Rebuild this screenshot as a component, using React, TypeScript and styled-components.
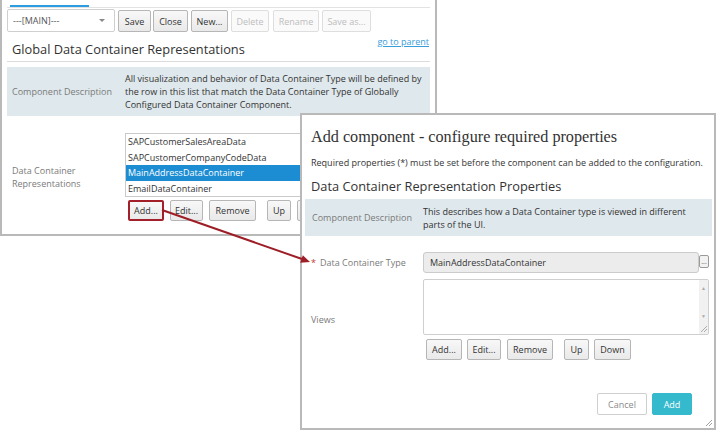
import React from 'react';
import styled, { createGlobalStyle, css } from 'styled-components';

const GlobalStyle = createGlobalStyle`
  html, body { margin: 0; padding: 0; background: #fff; }
  body {
    font-family: 'Open Sans', 'Noto Sans', sans-serif;
    font-size: 9px;
    color: #333;
  }
`;

const Page = styled.div`
  position: relative;
  width: 718px;
  height: 431px;
  overflow: hidden;
  background: #fff;
`;

/* ---------- main window ---------- */

const MainWindow = styled.div`
  width: 437px;
  height: 236px;
  box-sizing: border-box;
  border: 2px solid #b9b9b9;
  border-top: none;
  padding: 0 5px;
`;

const TabStrip = styled.div`
  height: 8px;
  box-sizing: border-box;
  padding: 5px 0 0 3px;
  border-bottom: 1px solid #e2e2e2;
`;

const ActiveTab = styled.div`
  width: 79px;
  height: 2px;
  background: #2d9de0;
`;

const Toolbar = styled.div`
  display: flex;
  align-items: flex-start;
  margin-top: 1px;
`;

const Select = styled.div`
  width: 108px;
  height: 23px;
  box-sizing: border-box;
  border: 1px solid #cfcfcf;
  border-radius: 2px;
  display: flex;
  align-items: center;
  justify-content: space-between;
  padding: 0 9px 0 5px;
  color: #555;
`;

const Caret = styled.span`
  width: 0;
  height: 0;
  border-left: 3px solid transparent;
  border-right: 3px solid transparent;
  border-top: 3px solid #888;
`;

const Button = styled.button<{ $w: number; $gap?: number; $disabled?: boolean; $highlight?: boolean; $h?: number }>`
  width: ${p => p.$w}px;
  height: ${p => p.$h ?? 21}px;
  flex: none;
  box-sizing: border-box;
  margin: 0 0 0 ${p => p.$gap ?? 0}px;
  padding: 0;
  font-family: inherit;
  font-size: 9px;
  line-height: 1;
  text-align: center;
  color: #333;
  background: linear-gradient(#f8f8f8, #e9e9e9);
  border: 1px solid #b6b6b6;
  border-radius: 2px;
  white-space: nowrap;
  ${p => p.$disabled && css`
    color: #bdbdbd;
    background: #fafafa;
    border-color: #dedede;
  `}
  ${p => p.$highlight && css`
    border: 2px solid #a31f2a;
  `}
`;

const ToolButton = styled(Button)`
  margin-top: 1px;
`;

const TitleRow = styled.div`
  height: 30px;
  box-sizing: border-box;
  display: flex;
  justify-content: space-between;
  align-items: flex-end;
  border-bottom: 1px solid #dcdcdc;
`;

const Title = styled.div`
  font-size: 12.8px;
  line-height: 16px;
  padding-left: 5px;
  margin-bottom: 4px;
  color: #333;
`;

const ParentLink = styled.a`
  align-self: flex-start;
  margin-top: 4px;
  padding-right: 1px;
  line-height: 12px;
  color: #3a9ddb;
  text-decoration: underline;
  font-size: 9px;
`;

const DescBox = styled.div<{ $h: number; $top: number }>`
  height: ${p => p.$h}px;
  margin-top: ${p => p.$top}px;
  background: #dfe8ec;
  display: flex;
  align-items: center;
`;

const DescLabel = styled.div<{ $pad: number }>`
  width: 118px;
  flex: none;
  box-sizing: border-box;
  padding-left: ${p => p.$pad}px;
  color: #7a7a7a;
`;

const DescText = styled.div<{ $w: number }>`
  width: ${p => p.$w}px;
  line-height: 13px;
  color: #333;
`;

const FieldRow = styled.div<{ $top: number }>`
  display: flex;
  align-items: center;
  margin-top: ${p => p.$top}px;
`;

const FieldLabel = styled.div<{ $pad: number }>`
  width: 118px;
  flex: none;
  box-sizing: border-box;
  padding-left: ${p => p.$pad}px;
  color: #7a7a7a;
  line-height: 13px;
`;

const FieldBody = styled.div`
  display: flex;
  flex-direction: column;
`;

const ListBox = styled.div`
  width: 200px;
  height: 64px;
  box-sizing: border-box;
  border: 1px solid #cacaca;
`;

const ListItem = styled.div<{ $selected?: boolean }>`
  height: 15.5px;
  line-height: 15.5px;
  padding-left: 2px;
  white-space: nowrap;
  ${p => p.$selected && css`
    background: #1d8dd3;
    color: #fff;
  `}
`;

const ButtonRow = styled.div<{ $top: number }>`
  display: flex;
  margin-top: ${p => p.$top}px;
  padding-left: 3px;
`;

/* ---------- dialog ---------- */

const Dialog = styled.div`
  position: absolute;
  left: 300px;
  top: 113px;
  width: 416px;
  height: 317px;
  box-sizing: border-box;
  border: 2px solid #b9b9b9;
  background: #fff;
  display: flex;
  flex-direction: column;
  padding: 0 2px 0 3px;
`;

const DialogTitle = styled.div`
  font-family: 'Liberation Serif', 'Times New Roman', serif;
  font-size: 16.2px;
  line-height: 20px;
  margin-top: 12px;
  padding-left: 6px;
  color: #333;
`;

const Note = styled.div`
  line-height: 12px;
  margin-top: 10px;
  padding-left: 6px;
`;

const SectionTitle = styled.div`
  font-size: 12.8px;
  line-height: 16px;
  margin-top: 9px;
  padding-left: 6px;
  color: #333;
`;

const Required = styled.span`
  color: #c0392b;
  margin-right: 4px;
`;

const InputRow = styled.div`
  display: flex;
  align-items: flex-start;
`;

const TextInput = styled.div`
  width: 276px;
  height: 21px;
  box-sizing: border-box;
  border: 1px solid #cbcbcb;
  border-radius: 3px;
  background: #ececec;
  padding-left: 6px;
  display: flex;
  align-items: center;
`;

const MoreButton = styled.div`
  width: 10px;
  height: 13px;
  margin-top: 3px;
  box-sizing: border-box;
  border: 1px solid #9a9a9a;
  border-radius: 2px;
  background: #f2f2f2;
  font-size: 7px;
  line-height: 12px;
  text-align: center;
  color: #555;
`;

const TextArea = styled.div`
  width: 286px;
  height: 56px;
  box-sizing: border-box;
  border: 1px solid #cfcfcf;
  border-radius: 2px;
  display: flex;
  justify-content: flex-end;
`;

const ScrollTrack = styled.div`
  width: 9px;
  background: #f1f1f1;
  display: flex;
  flex-direction: column;
  align-items: center;
  color: #a9a9a9;
  font-size: 5px;
  line-height: 8px;
  padding-top: 4px;
  box-sizing: border-box;
`;

const ScrollArrow = styled.span<{ $top?: number }>`
  margin-top: ${p => p.$top ?? 0}px;
`;

const Grip = styled.svg`
  margin-top: auto;
  margin-bottom: 1px;
  display: block;
`;

const Footer = styled.div`
  display: flex;
  justify-content: flex-end;
  gap: 5px;
  margin-top: 33px;
  padding-right: 20px;
`;

const FooterButton = styled.button<{ $primary?: boolean }>`
  height: 22px;
  box-sizing: border-box;
  font-family: inherit;
  font-size: 9px;
  border-radius: 2px;
  ${p => p.$primary ? css`
    width: 40px;
    background: #34b9cd;
    border: 1px solid #34b9cd;
    color: #fff;
  ` : css`
    width: 50px;
    background: #fff;
    border: 1px solid #cfcfcf;
    color: #8a8a8a;
  `}
`;

const CornerGrip = styled.svg`
  position: absolute;
  right: 1px;
  bottom: 1px;
`;

const Overlay = styled.svg`
  position: absolute;
  left: 0;
  top: 0;
  pointer-events: none;
`;

const GripLines = ({ color }: { color: string }) => (
  <>
    <line x1="7" y1="1" x2="1" y2="7" stroke={color} strokeWidth="0.8" />
    <line x1="7" y1="4" x2="4" y2="7" stroke={color} strokeWidth="0.8" />
  </>
);

const mainItems = ['SAPCustomerSalesAreaData', 'SAPCustomerCompanyCodeData', 'MainAddressDataContainer', 'EmailDataContainer'];

export default function App() {
  return (
    <Page>
      <GlobalStyle />
      <MainWindow>
        <TabStrip><ActiveTab /></TabStrip>
        <Toolbar>
          <Select>---[MAIN]---<Caret /></Select>
          <ToolButton $h={22} $w={33} $gap={3}>Save</ToolButton>
          <ToolButton $h={22} $w={35} $gap={2}>Close</ToolButton>
          <ToolButton $h={22} $w={37} $gap={3}>New...</ToolButton>
          <ToolButton $h={22} $w={38} $gap={3} $disabled>Delete</ToolButton>
          <ToolButton $h={22} $w={46} $gap={4} $disabled>Rename</ToolButton>
          <ToolButton $h={22} $w={49} $gap={3} $disabled>Save as...</ToolButton>
        </Toolbar>
        <TitleRow>
          <Title>Global Data Container Representations</Title>
          <ParentLink>go to parent</ParentLink>
        </TitleRow>
        <DescBox $h={49} $top={5}>
          <DescLabel $pad={5}>Component Description</DescLabel>
          <DescText $w={302}>
            All visualization and behavior of Data Container Type will be defined by the row in this list that match the Data Container Type of Globally Configured Data Container Component.
          </DescText>
        </DescBox>
        <FieldRow $top={17}>
          <FieldLabel $pad={5}>Data Container<br />Representations</FieldLabel>
          <FieldBody>
            <ListBox>
              {mainItems.map(item => (
                <ListItem key={item} $selected={item === 'MainAddressDataContainer'}>{item}</ListItem>
              ))}
            </ListBox>
            <ButtonRow $top={3}>
              <Button $w={36} $highlight>Add...</Button>
              <Button $w={33} $gap={6}>Edit...</Button>
              <Button $w={47} $gap={6}>Remove</Button>
              <Button $w={24} $gap={11}>Up</Button>
              <Button $w={37} $gap={6}>Down</Button>
            </ButtonRow>
          </FieldBody>
        </FieldRow>
      </MainWindow>

      <Dialog>
        <DialogTitle>Add component - configure required properties</DialogTitle>
        <Note>Required properties (*) must be set before the component can be added to the configuration.</Note>
        <SectionTitle>Data Container Representation Properties</SectionTitle>
        <DescBox $h={37} $top={5}>
          <DescLabel $pad={7}>Component Description</DescLabel>
          <DescText $w={270}>This describes how a Data Container type is viewed in different parts of the UI.</DescText>
        </DescBox>
        <FieldRow $top={16}>
          <FieldLabel $pad={6}><Required>*</Required>Data Container Type</FieldLabel>
          <InputRow>
            <TextInput>MainAddressDataContainer</TextInput>
            <MoreButton>...</MoreButton>
          </InputRow>
        </FieldRow>
        <FieldRow $top={6}>
          <FieldLabel $pad={6}>Views</FieldLabel>
          <FieldBody>
            <TextArea>
              <ScrollTrack>
                <ScrollArrow>▲</ScrollArrow>
                <ScrollArrow $top={20}>▼</ScrollArrow>
                <Grip width="8" height="8" viewBox="0 0 8 8"><GripLines color="#9a9a9a" /></Grip>
              </ScrollTrack>
            </TextArea>
            <ButtonRow $top={4}>
              <Button $w={36}>Add...</Button>
              <Button $w={34} $gap={5}>Edit...</Button>
              <Button $w={46} $gap={6}>Remove</Button>
              <Button $w={25} $gap={11}>Up</Button>
              <Button $w={37} $gap={5}>Down</Button>
            </ButtonRow>
          </FieldBody>
        </FieldRow>
        <Footer>
          <FooterButton>Cancel</FooterButton>
          <FooterButton $primary>Add</FooterButton>
        </Footer>
        <CornerGrip width="8" height="8" viewBox="0 0 8 8"><GripLines color="#888" /></CornerGrip>
      </Dialog>

      <Overlay width="718" height="431" viewBox="0 0 718 431">
        <line x1="162" y1="210" x2="302" y2="259" stroke="#9e1e27" strokeWidth="2" />
        <polygon points="310,262 300.2,262.8 302.8,255.2" fill="#9e1e27" />
      </Overlay>
    </Page>
  );
}
